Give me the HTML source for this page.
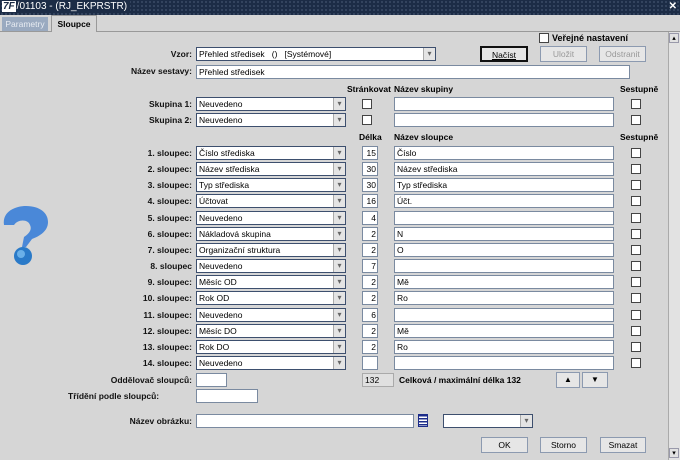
<!DOCTYPE html><html><head><meta charset="utf-8"><style>
*{box-sizing:border-box}body{margin:0;width:680px;height:460px;background:#d6d6d6;font-family:"Liberation Sans",sans-serif;font-size:8.5px;position:relative;overflow:hidden}
.a{position:absolute}
.tb{left:0;top:0;width:680px;height:15px;background:#1c2c46;background-image:radial-gradient(#6a7a96 0.7px,transparent 0.8px);background-size:4px 4px;color:#fff;font-size:10px;line-height:14px}
.l{position:absolute;font-weight:bold;text-align:right;width:190px;left:2px;color:#111}
.in{position:absolute;background:#fff;border:1px solid #7a8aa0;height:14px;padding:1px 2px;line-height:11px;white-space:nowrap;overflow:hidden}
.sel{position:absolute;background:#fff;border:1px solid #3d4f6e;height:14px;padding:1px 2px;line-height:11px;width:150px}
.sel:after{content:"▾";position:absolute;right:0;top:0;width:11px;height:12px;background:#e4e4e4;border-left:1px solid #aaa;color:#666;font-size:8px;text-align:center;line-height:12px}
.cb{position:absolute;width:10px;height:10px;background:#fff;border:1px solid #444}
.bt{position:absolute;height:16px;border:1px solid #8c9ab0;background:#e6e6e6;text-align:center;line-height:14px;font-size:8.5px}
.h{position:absolute;font-weight:bold}
</style></head><body>
<div class="a tb"><span style="background:#fff;color:#1c2c46;font-weight:bold;font-style:italic;padding:0 1px;margin:0 1px 0 2px">7F</span><span style="background:#1c2c46;padding-right:3px">/01103 - (RJ_EKPRSTR)</span><span style="position:absolute;right:3px;top:0;font-weight:bold">✕</span></div>
<div class="a" style="left:0;top:15px;width:680px;height:17px;background:#d6d6d6;border-bottom:1px solid #999"></div>
<div class="a" style="left:2px;top:17px;width:46px;height:14px;background:#9aaac0;color:#e8ecf2;text-align:center;line-height:14px">Parametry</div>
<div class="a" style="left:51px;top:15px;width:46px;height:17px;background:#d6d6d6;border:1px solid #999;border-bottom:none;text-align:center;line-height:16px;font-weight:bold">Sloupce</div>
<div class="a" style="left:668px;top:32px;width:12px;height:428px;background:#e2e2e2;border-left:1px solid #aaa"></div>
<div class="a" style="left:669px;top:33px;width:10px;height:10px;border:1px solid #99a;font-size:7px;text-align:center">▴</div>
<div class="a" style="left:669px;top:448px;width:10px;height:10px;border:1px solid #99a;font-size:7px;text-align:center">▾</div>
<svg class="a" style="left:0;top:203px" width="50" height="64"><path d="M4 22 C2 8 16 3 26 3 C40 3 48 10 48 19 C48 28 40 33 32 36 L26 44 L22 44 L24 34 C30 30 32 26 30 22 C28 16 18 16 14 22 Z" fill="#4a88d8"/><circle cx="23" cy="53" r="9" fill="#2a7ac8"/><circle cx="21" cy="51" r="4" fill="#6ab0e8"/></svg>
<div class="cb" style="left:539px;top:33px"></div><div class="h" style="left:552px;top:33px;font-size:9px">Veřejné nastavení</div>
<div class="l" style="top:49px">Vzor:</div><div class="sel" style="left:196px;top:47px;width:240px">Přehled středisek &nbsp; () &nbsp; [Systémové]</div>
<div class="bt" style="left:480px;top:46px;width:48px;border:2px solid #111"><u>Načíst</u></div>
<div class="bt" style="left:540px;top:46px;width:47px;color:#999">Uložit</div>
<div class="bt" style="left:599px;top:46px;width:47px;color:#999">Odstranit</div>
<div class="l" style="top:66px">Název sestavy:</div><div class="in" style="left:196px;top:65px;width:434px">Přehled středisek</div>
<div class="h" style="left:347px;top:84px">Stránkovat</div><div class="h" style="left:394px;top:84px">Název skupiny</div><div class="h" style="left:620px;top:84px">Sestupně</div>
<div class="l" style="top:99px">Skupina 1:</div><div class="sel" style="left:196px;top:97px">Neuvedeno</div><div class="cb" style="left:362px;top:99px"></div><div class="in" style="left:394px;top:97px;width:220px"></div><div class="cb" style="left:631px;top:99px"></div>
<div class="l" style="top:115px">Skupina 2:</div><div class="sel" style="left:196px;top:113px">Neuvedeno</div><div class="cb" style="left:362px;top:115px"></div><div class="in" style="left:394px;top:113px;width:220px"></div><div class="cb" style="left:631px;top:115px"></div>
<div class="h" style="left:359px;top:132px">Délka</div><div class="h" style="left:394px;top:132px">Název sloupce</div><div class="h" style="left:620px;top:132px">Sestupně</div>
<div id="rows"></div>
<script>
var d=[["1. sloupec:","Číslo střediska","15","Číslo"],["2. sloupec:","Název střediska","30","Název střediska"],["3. sloupec:","Typ střediska","30","Typ střediska"],["4. sloupec:","Účtovat","16","Účt."],["5. sloupec:","Neuvedeno","4",""],["6. sloupec:","Nákladová skupina","2","N"],["7. sloupec:","Organizační struktura","2","O"],["8. sloupec","Neuvedeno","7",""],["9. sloupec:","Měsíc OD","2","Mě"],["10. sloupec:","Rok OD","2","Ro"],["11. sloupec:","Neuvedeno","6",""],["12. sloupec:","Měsíc DO","2","Mě"],["13. sloupec:","Rok DO","2","Ro"],["14. sloupec:","Neuvedeno","",""]];
var h="";d.forEach(function(r,i){var y=Math.round(146+i*16.15);h+='<div class="l" style="top:'+(y+2)+'px">'+r[0]+'</div><div class="sel" style="left:196px;top:'+y+'px">'+r[1]+'</div><div class="in" style="left:362px;top:'+y+'px;width:16px;text-align:right;padding:1px 1px">'+r[2]+'</div><div class="in" style="left:394px;top:'+y+'px;width:220px">'+r[3]+'</div><div class="cb" style="left:631px;top:'+(y+2)+'px"></div>';});document.getElementById("rows").innerHTML=h;
</script>
<div class="l" style="top:375px">Oddělovač sloupců:</div><div class="in" style="left:196px;top:373px;width:31px"></div>
<div class="in" style="left:362px;top:373px;width:32px;background:#e0e0e0;border-color:#aaa">132</div><div class="h" style="left:399px;top:375px">Celková / maximální délka 132</div>
<div class="bt" style="left:556px;top:372px;width:24px;font-size:8px">▲</div><div class="bt" style="left:582px;top:372px;width:26px;font-size:8px">▼</div>
<div class="l" style="top:391px;width:124px;text-align:left;left:68px">Třídění podle sloupců:</div><div class="in" style="left:196px;top:389px;width:62px"></div>
<div class="l" style="top:416px">Název obrázku:</div><div class="in" style="left:196px;top:414px;width:218px"></div>
<div class="a" style="left:418px;top:414px;width:10px;height:13px;background:repeating-linear-gradient(#1c2c8a 0 1.5px,#fff 1.5px 3px);border:1px solid #1c2c8a"></div>
<div class="sel" style="left:443px;top:414px;width:90px"></div>
<div class="bt" style="left:481px;top:437px;width:47px">OK</div><div class="bt" style="left:540px;top:437px;width:47px">Storno</div><div class="bt" style="left:600px;top:437px;width:46px">Smazat</div>
</body></html>
